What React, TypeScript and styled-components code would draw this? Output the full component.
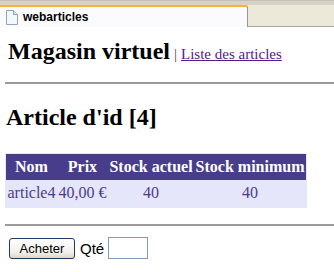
import styled, { createGlobalStyle } from 'styled-components'

const GlobalStyle = createGlobalStyle`
  html, body {
    margin: 0;
    padding: 0;
    background: #ffffff;
  }
  body {
    font-family: "Liberation Serif", "Times New Roman", serif;
    color: #000;
  }
`

const articles = [{ id: 4, nom: 'article4', prix: '40,00 €', stockActuel: 40, stockMinimum: 40 }]

const App = () => {
  const article = articles[0]

  return (
    <>
      <GlobalStyle />
      <TabBar>
        <Tab>
          <PageIcon width="12" height="15" viewBox="0 0 12 15">
            <path d="M0.5 0.5h7l4 4v10h-11z" fill="#f4f7fc" stroke="#8ea3c4" />
            <path d="M7.5 0.5v4h4" fill="#dfe7f3" stroke="#8ea3c4" />
          </PageIcon>
          <TabTitle>webarticles</TabTitle>
        </Tab>
        <TabFiller />
      </TabBar>

      <Page>
        <Header>
          <Title>Magasin virtuel</Title>
          <Separator>|</Separator>
          <NavLink href="#">Liste des articles</NavLink>
        </Header>
        <Rule $top={17} />

        <Heading>Article d'id [{article.id}]</Heading>

        <Table>
          <thead>
            <tr>
              <Th>Nom</Th>
              <Th>Prix</Th>
              <Th>Stock actuel</Th>
              <Th>Stock minimum</Th>
            </tr>
          </thead>
          <tbody>
            <tr>
              <Td>{article.nom}</Td>
              <Td>{article.prix}</Td>
              <Td>{article.stockActuel}</Td>
              <Td>{article.stockMinimum}</Td>
            </tr>
          </tbody>
        </Table>

        <Rule $top={16} />

        <BuyForm>
          <BuyButton type="button">Acheter</BuyButton>
          <QtyLabel>Qté</QtyLabel>
          <QtyInput type="text" />
        </BuyForm>
      </Page>
    </>
  )
}

const TabBar = styled.div`
  display: flex;
  height: 27px;
  background: #d6d3c6;
  padding-top: 4px;
  box-sizing: border-box;
  border-top: 1px solid #c4c1b4;
`
const Tab = styled.div`
  display: flex;
  align-items: center;
  gap: 5px;
  width: 248px;
  box-sizing: border-box;
  padding: 0 0 0 6px;
  background: #fbfbfd;
  border-top: 2px solid #f6b33a;
  border-right: 1px solid #8f9a9c;
  border-top-right-radius: 3px;
`
const PageIcon = styled.svg`
  flex-shrink: 0;
`
const TabTitle = styled.span`
  font-family: "Liberation Sans", Tahoma, sans-serif;
  font-weight: bold;
  font-size: 12px;
  color: #000;
`
const TabFiller = styled.div`
  flex: 1;
  background: #ece9d8;
  border-bottom: 1px solid #a7a6a0;
`
const Page = styled.div`
  padding: 0 0 0 5px;
`
const Header = styled.div`
  display: flex;
  align-items: baseline;
  gap: 4px;
  margin: 11px 0 0 3px;
`
const Title = styled.h2`
  margin: 0;
  font-size: 24px;
  font-weight: bold;
`
const Separator = styled.span`
  font-size: 15px;
  color: #444;
`
const NavLink = styled.a`
  font-size: 15px;
  color: #551a8b;
  text-decoration: underline;
`
const Rule = styled.hr<{ $top: number }>`
  margin: ${(p) => p.$top}px 0 0 0;
  border: none;
  border-top: 2px solid #9a9a9a;
  height: 0;
`
const Heading = styled.h2`
  margin: 20px 0 0 1px;
  font-size: 24px;
  font-weight: bold;
`
const Table = styled.table`
  margin-top: 22px;
  border-collapse: separate;
  border-spacing: 0;
  background: #e6e6fa;
  padding: 1px;
`
const Th = styled.th`
  background: #483d8b;
  color: #ffffff;
  font-size: 16px;
  font-weight: bold;
  padding: 4px 1.5px;
  white-space: nowrap;
`
const Td = styled.td`
  color: #483d8b;
  font-size: 16px;
  text-align: center;
  padding: 4px 1.5px 5px;
  white-space: nowrap;
`
const BuyForm = styled.div`
  display: flex;
  align-items: center;
  gap: 5px;
  margin: 11px 0 0 4px;
`
const BuyButton = styled.button`
  width: 66px;
  height: 21px;
  padding: 0;
  font-family: "Liberation Sans", Tahoma, sans-serif;
  font-size: 13px;
  color: #000;
  border: 1px solid #1c3a6a;
  border-radius: 3px;
  background: linear-gradient(#ffffff, #f1f0ea 70%, #dcd8c8);
`
const QtyLabel = styled.span`
  font-family: "Liberation Sans", Arial, sans-serif;
  font-size: 15px;
`
const QtyInput = styled.input`
  width: 40px;
  height: 22px;
  box-sizing: border-box;
  margin-left: -1px;
  border: 1px solid #7f9db9;
  padding: 0 2px;
`

export default App
